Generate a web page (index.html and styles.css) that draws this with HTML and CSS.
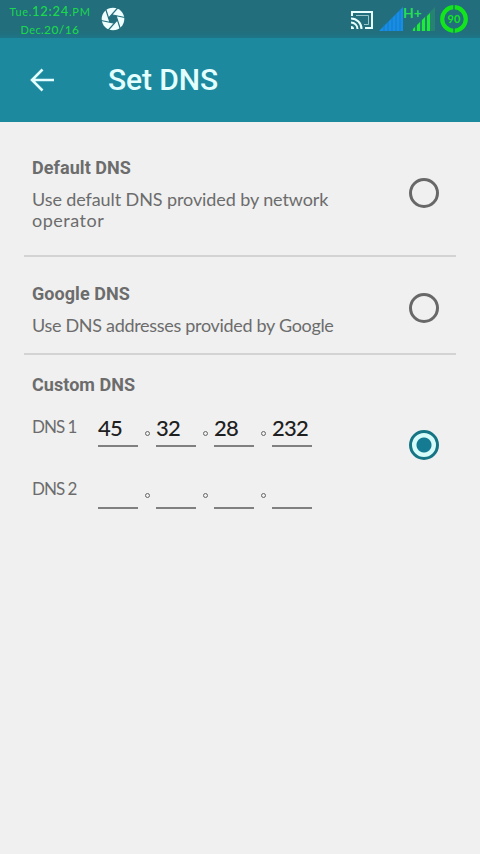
FILE: index.html
```html
<!DOCTYPE html>
<html lang="en">
<head>
<meta charset="utf-8">
<title>Set DNS</title>
<link rel="stylesheet" href="styles.css">
</head>
<body>
<header class="status">
  <div class="clock">
    <div class="time"><span>Tue.</span><b>12:24</b><span>.PM</span></div>
    <div class="date"><span>Dec.</span><b>20/16</b></div>
  </div>
  <svg class="shutter" viewBox="0 0 24 24" width="24" height="24">
    <circle cx="12" cy="12" r="11.3" fill="#effeff"/>
    <g transform="rotate(12 12 12)"><path d="M16.5 12L9.75 23.7M14.25 15.9H.75M9.75 15.9L3 4.2M7.5 12L14.25 .3M9.75 8.1H23.25M14.25 8.1L21 19.8" stroke="#226e7c" stroke-width="1.2" fill="none"/>
    <path d="M16.5 12L14.25 15.9H9.75L7.5 12L9.75 8.1H14.25Z" fill="#226e7c"/></g>
  </svg>
  <div class="indicators">
    <svg viewBox="0 0 24 20" width="24" height="20" fill="none" stroke="#e7ffff" stroke-width="2">
      <path d="M2 6V2H22V18H15"/>
      <path d="M1 8.5A10.5 10.5 0 0 1 11.5 19M1 12.5A6.5 6.5 0 0 1 7.5 19"/>
      <path d="M1 16A3 3 0 0 1 4 19H1Z" fill="#e7ffff" stroke="none"/>
      <path d="M6 5.5H18.5V14.5H14" stroke="#b9dce0" stroke-width=".8"/>
    </svg>
    <svg class="signals" viewBox="0 0 57 27" width="57" height="27">
      <path d="M0 26L24 2V26Z" fill="#168de6"/>
      <path d="M5 19V26M9 16V26M13 12V26M17 8V26M21 5V26" stroke="#1677b8" stroke-width=".8"/>
      <path d="M32 26L56 2V26Z" fill="#268271"/>
      <path d="M34 26V24L36 22V26ZM38 26V20L41 17V26ZM43 26V15L46 12V26ZM48 26V11L51 8V26Z" fill="#1cec39"/>
      <text x="24" y="13" class="network">H+</text>
    </svg>
    <svg viewBox="0 0 30 30" width="30" height="30">
      <circle cx="15" cy="15" r="11.8" fill="none" stroke="#12e51c" stroke-width="4.2"/>
      <path d="M15 0V6M15 24V30" stroke="#226e7c" stroke-width="1.3"/>
      <text x="15" y="19" text-anchor="middle" class="battery">90</text>
    </svg>
  </div>
</header>
<div class="appbar">
  <svg viewBox="0 0 26 24" width="26" height="24" fill="none" stroke="#e3ffff" stroke-width="2.6"><path d="M24 12H2.5M12.5 1.5L2 12L12.5 22.5"/></svg>
  <h1>Set DNS</h1>
</div>
<main>
  <section class="option default">
    <div class="copy"><h2>Default DNS</h2><p><span class="line-a">Use default DNS provided by network</span><br><span class="line-b">operator</span></p></div>
    <span class="radio"></span>
  </section>
  <section class="option google">
    <div class="copy"><h2>Google DNS</h2><p class="line-c">Use DNS addresses provided by Google</p></div>
    <span class="radio"></span>
  </section>
  <section class="option custom">
    <div class="copy">
      <h2>Custom DNS</h2>
      <div class="address"><label>DNS 1</label><span class="octet">45</span><i></i><span class="octet">32</span><i></i><span class="octet">28</span><i></i><span class="octet">232</span></div>
      <div class="address"><label>DNS 2</label><span class="octet"></span><i></i><span class="octet"></span><i></i><span class="octet"></span><i></i><span class="octet"></span></div>
    </div>
    <span class="radio checked"></span>
  </section>
</main>
</body>
</html>
```

FILE: styles.css
```css
* { box-sizing: border-box; }
body { margin: 0; height: 854px; overflow: hidden; background: #f0f0f0; color: #6c6c6c; font-family: Lato, "Open Sans", sans-serif; }
.status { height: 38px; display: flex; background: linear-gradient(#226e7c 0 31px, #1d7587 38px); }
.clock { width: 82px; margin-left: 9px; padding-top: 3px; color: #1bd94c; font-size: 11px; text-align: center; white-space: nowrap; }
.clock b { font-size: 13px; font-weight: 500; }
.time { height: 18px; line-height: 17px; letter-spacing: .7px; }
.date { height: 16px; line-height: 18px; letter-spacing: .4px; }
.date b { font-size: 12px; }
.shutter { margin: 7px 0 0 10px; }
.indicators { display: flex; margin-left: auto; padding-right: 11px; }
.indicators svg:first-child { margin: 10px 5px 0 0; }
.signals { margin: 5px 3px 0 0; }
.indicators svg:last-child { margin-top: 4px; }
.network { fill: #25df55; font: bold 14px Lato, sans-serif; }
.battery { fill: #12e51c; font: bold 11px Lato, sans-serif; }
.appbar { height: 84px; display: flex; align-items: center; gap: 52px; padding-left: 30px; background: #1c899e; }
h1 { margin: 0; color: #e3ffff; font: 500 30px/36px Roboto, sans-serif; letter-spacing: -.1px; }
main { padding: 0 24px; }
.option { display: flex; justify-content: space-between; padding: 0 17px 0 8px; }
.default { height: 135px; padding-top: 35px; border-bottom: 2px solid #d3d3d3; }
.google { height: 98px; padding-top: 26px; border-bottom: 2px solid #d3d3d3; }
.custom { padding-top: 19px; }
h2 { margin: 0; font: bold 18px/22px Roboto, sans-serif; letter-spacing: .05px; }
p { margin: 10px 0 0; font-size: 18px; line-height: 21px; white-space: nowrap; }
.line-a { letter-spacing: -.1px; }
.line-b { letter-spacing: .5px; }
.line-c { letter-spacing: -.31px; }
.radio { width: 30px; height: 30px; border: 3px solid #686868; border-radius: 50%; }
.default .radio { margin-top: 21px; }
.google .radio { margin-top: 10px; }
.checked { margin-top: 56px; border-color: #167584; background: radial-gradient(circle, #157b93 7px, #d7fbf9 8px); }
.address { display: flex; height: 62px; padding-top: 19px; }
label { width: 66px; font-size: 17px; line-height: 24px; letter-spacing: -1px; }
.octet { width: 40px; height: 32px; border-bottom: 2px solid #808080; color: #202020; font-size: 22px; font-weight: 500; line-height: 25px; letter-spacing: -.8px; }
.address i { width: 5px; height: 5px; margin: 16px 6px 0 7px; border: 1px solid #666; border-radius: 50%; }
```
